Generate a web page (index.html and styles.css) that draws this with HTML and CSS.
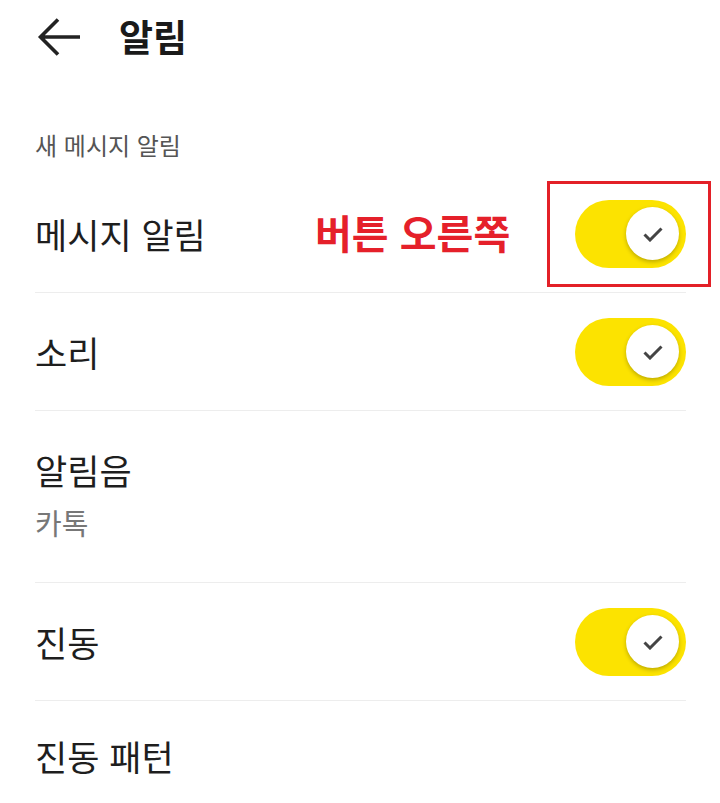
FILE: index.html
```html
<!DOCTYPE html>
<html lang="ko">
<head>
<meta charset="utf-8">
<link rel="stylesheet" href="styles.css">
</head>
<body>
<div class="screen">
  <header class="header">
    <svg class="back" width="46" height="42" viewBox="0 0 46 42">
      <path d="M44 21H5M22 3.5L4.5 21L22 38.5" fill="none" stroke="#222" stroke-width="3.6" stroke-linecap="butt" stroke-linejoin="miter"/>
    </svg>
    <h1 class="title">알림</h1>
  </header>
  <div class="section-label">새 메시지 알림</div>
  <div class="row">
    <span class="row-title">메시지 알림</span>
    <span class="annot-text">버튼 오른쪽</span>
    <span class="toggle"><span class="thumb"><svg width="22" height="16" viewBox="0 0 22 16"><path d="M2.5 8.5l5.5 5.5L19.5 2.5" fill="none" stroke="#444" stroke-width="3"/></svg></span></span>
    <span class="annot-box"></span>
  </div>
  <div class="row">
    <span class="row-title">소리</span>
    <span class="toggle"><span class="thumb"><svg width="22" height="16" viewBox="0 0 22 16"><path d="M2.5 8.5l5.5 5.5L19.5 2.5" fill="none" stroke="#444" stroke-width="3"/></svg></span></span>
  </div>
  <div class="row row-tall">
    <div class="stack">
      <span class="row-title">알림음</span>
      <span class="row-sub">카톡</span>
    </div>
  </div>
  <div class="row">
    <span class="row-title">진동</span>
    <span class="toggle"><span class="thumb"><svg width="22" height="16" viewBox="0 0 22 16"><path d="M2.5 8.5l5.5 5.5L19.5 2.5" fill="none" stroke="#444" stroke-width="3"/></svg></span></span>
  </div>
  <div class="row row-last">
    <span class="row-title">진동 패턴</span>
  </div>
</div>
</body>
</html>
```
FILE: styles.css
```css
* { box-sizing: border-box; }
html, body { margin: 0; padding: 0; background: #fff; }
body {
  font-family: "Noto Sans CJK KR", "Noto Sans", sans-serif;
  color: #1e1e1e;
  width: 720px;
  height: 803px;
  overflow: hidden;
}
.screen { padding: 0 34px 0 35px; }
.header {
  height: 74px;
  display: flex;
  align-items: center;
  gap: 37px;
}
.back { display: block; margin-left: 1px; margin-top: -1px; }
.title {
  margin: 0;
  font-size: 37px;
  font-weight: 700;
  line-height: 40px;
  color: #1a1a1a;
  margin-top: -2px;
}
.section-label {
  margin-top: 56px;
  height: 45px;
  font-size: 24px;
  line-height: 30px;
  color: #555;
}
.row {
  position: relative;
  height: 118px;
  display: flex;
  align-items: center;
  justify-content: space-between;
  border-bottom: 1px solid #ededed;
}
.row-tall { height: 172px; }
.row-last { border-bottom: none; height: 110px; }
.row-title {
  font-size: 35px;
  line-height: 40px;
  color: #1e1e1e;
}
.stack { display: flex; flex-direction: column; gap: 14px; margin-top: -4px; }
.row-sub { font-size: 29px; line-height: 36px; color: #777; }
.toggle {
  width: 111px;
  height: 68px;
  border-radius: 34px;
  background: #fce300;
  display: flex;
  align-items: center;
  justify-content: flex-end;
  padding-right: 7px;
}
.thumb {
  width: 53px;
  height: 53px;
  border-radius: 50%;
  background: #fff;
  box-shadow: 0 2px 4px rgba(0,0,0,0.25);
  display: flex;
  align-items: center;
  justify-content: center;
}
.thumb svg { display: block; }
.annot-text {
  position: absolute;
  left: 280px;
  top: 34px;
  font-size: 40px;
  font-weight: 700;
  line-height: 46px;
  color: #e5202a;
}
.annot-box {
  position: absolute;
  left: 512px;
  top: 6px;
  width: 164px;
  height: 106px;
  border: 3px solid #e32028;
}
```
